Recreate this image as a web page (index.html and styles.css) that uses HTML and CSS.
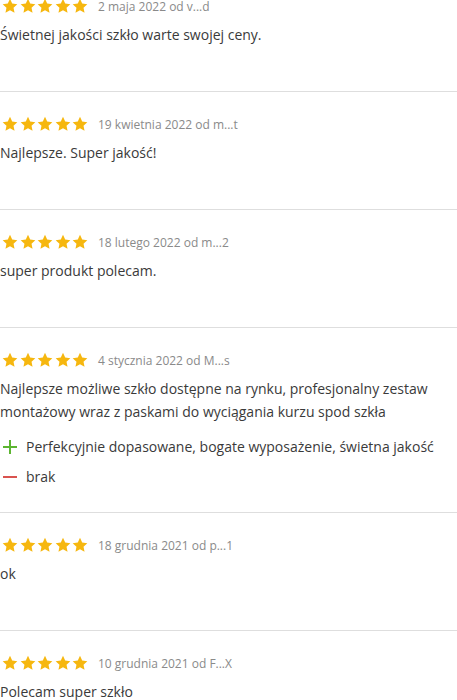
FILE: index.html
```html
<!DOCTYPE html>
<html lang="pl">
<head>
<meta charset="utf-8">
<link rel="stylesheet" href="styles.css">
</head>
<body>
<svg width="0" height="0" class="defs">
  <defs>
    <symbol id="star" viewBox="0 0 24 24">
      <path d="M12 1.2l3.3 7.1 7.7.9-5.7 5.3 1.5 7.7L12 18.4l-6.8 3.8 1.5-7.7L1 9.2l7.7-.9z"/>
    </symbol>
  </defs>
</svg>
<div class="reviews">
  <div class="review">
    <div class="head">
      <span class="stars"><svg class="star"><use href="#star"/></svg><svg class="star"><use href="#star"/></svg><svg class="star"><use href="#star"/></svg><svg class="star"><use href="#star"/></svg><svg class="star"><use href="#star"/></svg></span>
      <span class="meta">2 maja 2022 od v...d</span>
    </div>
    <p class="comment">Świetnej jakości szkło warte swojej ceny.</p>
  </div>
  <div class="review">
    <div class="head">
      <span class="stars"><svg class="star"><use href="#star"/></svg><svg class="star"><use href="#star"/></svg><svg class="star"><use href="#star"/></svg><svg class="star"><use href="#star"/></svg><svg class="star"><use href="#star"/></svg></span>
      <span class="meta">19 kwietnia 2022 od m...t</span>
    </div>
    <p class="comment">Najlepsze. Super jakość!</p>
  </div>
  <div class="review">
    <div class="head">
      <span class="stars"><svg class="star"><use href="#star"/></svg><svg class="star"><use href="#star"/></svg><svg class="star"><use href="#star"/></svg><svg class="star"><use href="#star"/></svg><svg class="star"><use href="#star"/></svg></span>
      <span class="meta">18 lutego 2022 od m...2</span>
    </div>
    <p class="comment">super produkt polecam.</p>
  </div>
  <div class="review has-pros">
    <div class="head">
      <span class="stars"><svg class="star"><use href="#star"/></svg><svg class="star"><use href="#star"/></svg><svg class="star"><use href="#star"/></svg><svg class="star"><use href="#star"/></svg><svg class="star"><use href="#star"/></svg></span>
      <span class="meta">4 stycznia 2022 od M...s</span>
    </div>
    <p class="comment">Najlepsze możliwe szkło dostępne na rynku, profesjonalny zestaw montażowy wraz z paskami do wyciągania kurzu spod szkła</p>
    <ul class="proscons">
      <li class="pro"><svg class="sign" viewBox="0 0 14 14"><path d="M7 0v14M0 7h14"/></svg><span>Perfekcyjnie dopasowane, bogate wyposażenie, świetna jakość</span></li>
      <li class="con"><svg class="sign" viewBox="0 0 14 14"><path d="M0 7h14"/></svg><span>brak</span></li>
    </ul>
  </div>
  <div class="review">
    <div class="head">
      <span class="stars"><svg class="star"><use href="#star"/></svg><svg class="star"><use href="#star"/></svg><svg class="star"><use href="#star"/></svg><svg class="star"><use href="#star"/></svg><svg class="star"><use href="#star"/></svg></span>
      <span class="meta">18 grudnia 2021 od p...1</span>
    </div>
    <p class="comment">ok</p>
  </div>
  <div class="review">
    <div class="head">
      <span class="stars"><svg class="star"><use href="#star"/></svg><svg class="star"><use href="#star"/></svg><svg class="star"><use href="#star"/></svg><svg class="star"><use href="#star"/></svg><svg class="star"><use href="#star"/></svg></span>
      <span class="meta">10 grudnia 2021 od F...X</span>
    </div>
    <p class="comment">Polecam super szkło</p>
  </div>
</div>
</body>
</html>
```
FILE: styles.css
```css
html, body {
  margin: 0;
  padding: 0;
  background: #fff;
}
body {
  font-family: "Open Sans", "Noto Sans", sans-serif;
  color: #3a3a3a;
  font-size: 14px;
  overflow: hidden;
}
.defs {
  position: absolute;
  width: 0;
  height: 0;
}
.reviews {
  margin-top: -26px;
}
.review {
  padding: 22px 0 45px;
  border-bottom: 1px solid #dedede;
}
.review.has-pros {
  padding-bottom: 24px;
}
.head {
  display: flex;
  align-items: center;
  height: 20px;
}
.stars {
  display: flex;
  gap: 1.5px;
  margin-left: 2px;
}
.star {
  width: 16px;
  height: 16px;
  fill: #f6b70f;
}
.meta {
  margin-left: 10px;
  font-size: 12px;
  color: #8a8a8a;
}
.comment {
  margin: 7px 0 0;
  line-height: 23px;
}
.proscons {
  list-style: none;
  margin: 13px 0 0;
  padding: 0;
  display: flex;
  flex-direction: column;
  gap: 8px;
}
.proscons li {
  display: flex;
  align-items: center;
  line-height: 22px;
}
.sign {
  width: 14px;
  height: 14px;
  margin: 0 9px 0 3px;
  fill: none;
  stroke-width: 2;
}
.pro .sign {
  stroke: #5cb531;
}
.con .sign {
  stroke: #d9534f;
}
```
